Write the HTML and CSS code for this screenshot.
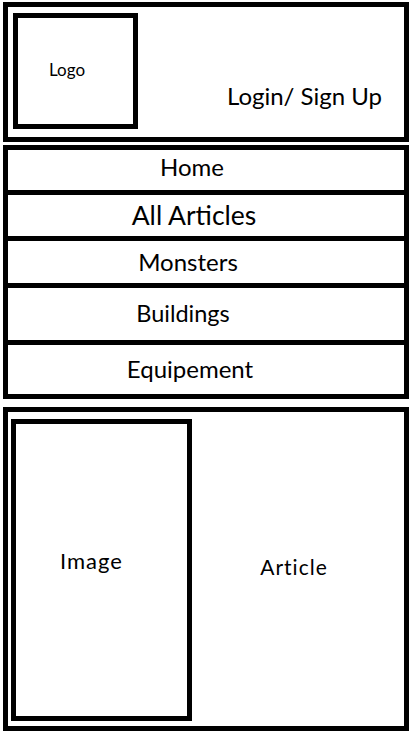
FILE: index.html
```html
<!DOCTYPE html>
<html lang="en">
<head>
    <meta charset="UTF-8">
    <meta name="viewport" content="width=device-width, initial-scale=1.0">
    <title>Wiki Wireframe</title>
    <link rel="stylesheet" href="styles.css">
</head>
<body>
    <header class="header">
        <div class="logo-box">Logo</div>
        <a class="login" href="#">Login/ Sign Up</a>
    </header>

    <nav class="nav">
        <a class="nav-item nav-home" href="#">Home</a>
        <a class="nav-item nav-articles" href="#">All Articles</a>
        <a class="nav-item nav-monsters" href="#">Monsters</a>
        <a class="nav-item nav-buildings" href="#">Buildings</a>
        <a class="nav-item nav-equipment" href="#">Equipement</a>
    </nav>

    <main class="content">
        <div class="image-box">Image</div>
        <div class="article">Article</div>
    </main>
</body>
</html>
```

FILE: styles.css
```css
* {
    box-sizing: border-box;
}
body {
    font-family: Lato, "Open Sans", sans-serif;
    color: #000;
    background-color: #fff;
    margin: 0;
    padding: 2px 5px 0 3px;
}
a {
    color: #000;
    text-decoration: none;
}
.header {
    display: flex;
    height: 140px;
    border: 5px solid #000;
    padding: 6px 22px 8px 5px;
}
.logo-box {
    display: flex;
    align-items: center;
    width: 125px;
    height: 116px;
    border: 5px solid #000;
    padding: 0 0 4px 31px;
    font-size: 17px;
    line-height: 1;
}
.login {
    margin-left: auto;
    align-self: flex-end;
    margin-bottom: 21px;
    font-size: 24px;
    line-height: 1;
}
.nav {
    display: flex;
    flex-direction: column;
    margin-top: 3px;
    border: 5px solid #000;
}
.nav-item {
    display: flex;
    align-items: center;
    justify-content: center;
    padding-right: 32px;
    border-top: 5px solid #000;
    font-size: 24px;
    line-height: 1;
}
.nav-home {
    height: 40px;
    border-top: none;
    padding-right: 28px;
    padding-bottom: 6px;
}
.nav-articles {
    height: 46px;
    font-size: 26.5px;
    padding-right: 24px;
}
.nav-monsters {
    height: 47px;
    padding-right: 36px;
}
.nav-buildings {
    height: 57px;
    font-size: 23.5px;
    padding-right: 46px;
}
.nav-equipment {
    height: 54px;
    padding-bottom: 1px;
}
.content {
    display: flex;
    height: 324px;
    margin-top: 8px;
    border: 5px solid #000;
    padding: 7px 0 5px 3px;
}
.image-box {
    display: flex;
    align-items: center;
    width: 181px;
    border: 5px solid #000;
    padding: 0 0 18px 44px;
    font-size: 22px;
    letter-spacing: 1px;
    line-height: 1;
}
.article {
    flex: 1;
    display: flex;
    align-items: center;
    justify-content: center;
    padding: 0 8px 8px 0;
    font-size: 21px;
    letter-spacing: 1px;
    line-height: 1;
}
```
